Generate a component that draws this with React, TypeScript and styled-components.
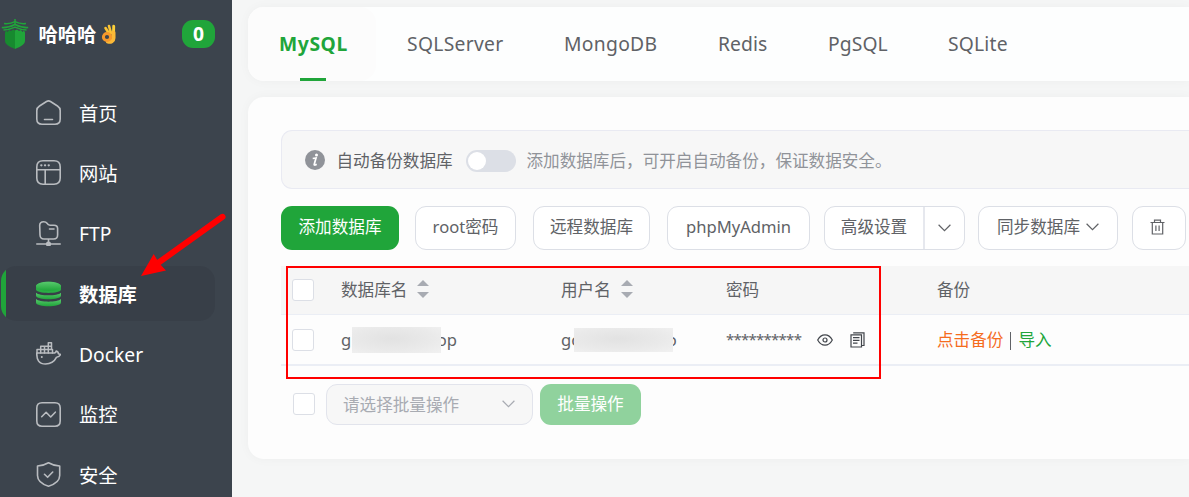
import { ReactNode } from "react";
import styled, { createGlobalStyle } from "styled-components";

const GlobalStyle = createGlobalStyle`
  * {
    box-sizing: border-box;
  }
  body {
    margin: 0;
    overflow: hidden;
    background: #f5f6f6;
    font-family: "Noto Sans", "Noto Sans CJK SC", sans-serif;
    font-size: 16.6px;
    color: #606266;
  }
`;

const Wrapper = styled.div`
  position: relative;
  display: flex;
  width: 1189px;
  height: 497px;
  overflow: hidden;
`;
const Sidebar = styled.aside`
  flex: 0 0 232px;
  height: 100%;
  background: #3c444d;
  color: #fff;
  font-size: 19.3px;
  overflow: hidden;
`;
const Brand = styled.div`
  display: flex;
  align-items: center;
  height: 68px;
  padding: 0 17px 0 1px;
  margin-bottom: 17px;
  font-weight: 700;
`;
const BrandName = styled.span`
  margin-left: 9.5px;
  padding-top: 1px;
  line-height: 28px;
`;
const Badge = styled.span`
  width: 33px;
  height: 28px;
  margin-left: auto;
  border-radius: 11px;
  background: #20a53a;
  line-height: 27px;
  text-align: center;
`;
const MenuItem = styled.div<{ $active?: boolean }>`
  display: flex;
  align-items: center;
  gap: 18px;
  width: 214px;
  height: 55px;
  margin: 0 0 5.4px 1px;
  padding-left: 35px;
  border-radius: 15px;
  background: ${(props) => (props.$active ? "linear-gradient(90deg, #20a53a 5px, #383f48 5px)" : "transparent")};
  font-weight: ${(props) => (props.$active ? 700 : 400)};
  line-height: 30px;
  svg {
    flex: none;
  }
`;
const MenuName = styled.span`
  padding-top: 2px;
`;
const Main = styled.main`
  flex: 1;
  min-width: 0;
  padding: 7px 0 0 16px;
`;
const Card = styled.section`
  background: #fdfefe;
  border-radius: 16px 0 0 16px;
  box-shadow: 0 0 12px rgba(0, 0, 0, 0.035);
`;
const Tabs = styled(Card)`
  display: flex;
  height: 74px;
  margin-bottom: 16px;
  font-size: 19.3px;
`;
const Tab = styled.div<{ $width: number; $spacing: number; $active?: boolean }>`
  position: relative;
  flex: none;
  width: ${(props) => props.$width}px;
  padding-left: 31px;
  border-radius: 16px;
  background: ${(props) => (props.$active ? "#fcfcfc" : "transparent")};
  color: ${(props) => (props.$active ? "#20a53a" : "#606266")};
  font-weight: ${(props) => (props.$active ? 700 : 400)};
  letter-spacing: ${(props) => props.$spacing}px;
  line-height: 74px;
  &::after {
    content: "";
    display: ${(props) => (props.$active ? "block" : "none")};
    position: absolute;
    left: 52px;
    bottom: 0;
    width: 26px;
    height: 3px;
    background: #20a53a;
  }
`;
const Panel = styled(Card)`
  height: 362px;
  padding: 33px 0 0 33px;
  background: #fdfdfd;
`;
const Notice = styled.div`
  display: flex;
  align-items: center;
  height: 59px;
  padding-left: 23px;
  border: 1px solid #e9eaf2;
  border-right: 0;
  border-radius: 11px 0 0 11px;
  background: #f7f7f7;
  white-space: nowrap;
`;
const NoticeTitle = styled.span`
  width: 117px;
  margin: 0 12px 0 11.5px;
`;
const NoticeText = styled.span`
  margin-left: 11px;
  color: #909399;
`;
const Switch = styled.span`
  width: 50px;
  height: 22px;
  margin-top: 2px;
  padding: 2px;
  border-radius: 11px;
  background: #dcdfe6;
  &::after {
    content: "";
    display: block;
    width: 18px;
    height: 18px;
    border-radius: 50%;
    background: #fff;
  }
`;
const Toolbar = styled.div`
  display: flex;
  height: 44px;
  margin: 17px 0 16px;
`;
const Button = styled.button<{ $width: number; $gap?: number; $primary?: boolean; $faded?: boolean }>`
  display: flex;
  flex: none;
  align-items: center;
  justify-content: center;
  gap: 6px;
  width: ${(props) => props.$width}px;
  height: 100%;
  margin: 0 ${(props) => props.$gap ?? 0}px 0 0;
  padding: 0 0 2px;
  border: ${(props) => (props.$primary ? "none" : "1px solid #dcdfe6")};
  border-radius: 11px;
  background: ${(props) => (props.$primary ? (props.$faded ? "#90d29d" : "#20a53a") : "#fff")};
  color: ${(props) => (props.$primary ? "#fff" : "#606266")};
  font: inherit;
  line-height: 40px;
  white-space: nowrap;
`;
const SplitButton = styled(Button)`
  padding: 0;
`;
const SplitLabel = styled.span`
  flex: 1;
  height: 42px;
  text-align: center;
  border-right: 2px solid #e6e8ee;
`;
const SplitArrow = styled.span`
  display: flex;
  align-items: center;
  justify-content: center;
  width: 39px;
  margin-left: -6px;
`;
const Row = styled.div<{ $head?: boolean }>`
  display: grid;
  grid-template-columns: 60px 220px 165px 211px 1fr;
  align-items: center;
  height: ${(props) => (props.$head ? 49 : 51)}px;
  border-bottom: ${(props) => (props.$head ? 1 : 2)}px solid #ebeef5;
  background: ${(props) => (props.$head ? "#f6f6f6" : "transparent")};
  line-height: 30px;
`;
const Cell = styled.div`
  display: flex;
  align-items: center;
  white-space: nowrap;
`;
const CheckBox = styled.span`
  flex: none;
  width: 22px;
  height: 22px;
  margin-left: 11px;
  border: 1px solid #dcdfe6;
  border-radius: 3px;
  background: #fff;
`;
const Sorter = styled.span`
  display: flex;
  flex-direction: column;
  gap: 6px;
  margin: 0 0 2px 10px;
  &::before,
  &::after {
    content: "";
    border: 6px solid transparent;
  }
  &::before {
    border-top: 0;
    border-bottom-color: #a8abb2;
  }
  &::after {
    border-bottom: 0;
    border-top-color: #a8abb2;
  }
`;
// blurred patch laid over the middle of a name
const Mask = styled.span<{ $width: number; $height: number; $left: number; $right: number }>`
  position: relative;
  width: ${(props) => props.$width}px;
  height: ${(props) => props.$height}px;
  margin: 0 ${(props) => props.$right}px 0 ${(props) => props.$left}px;
  background: radial-gradient(ellipse at 45% 45%, #e2e2e2, #eaeaea 60%, #f1f1f1);
`;
const Stars = styled.span`
  width: 91px;
  margin-top: -2px;
  font-size: 15px;
  letter-spacing: -0.75px;
`;
const Link = styled.a<{ $color: string }>`
  color: ${(props) => props.$color};
`;
const Divider = styled.span`
  width: 1px;
  height: 18px;
  margin: 2px 7px 0;
  background: #606266;
`;
const Batch = styled.div`
  display: flex;
  align-items: center;
  height: 41px;
  margin: 18px 0 0 1px;
  & > ${CheckBox} {
    margin-bottom: 1px;
  }
`;
const Select = styled.div`
  display: flex;
  align-items: center;
  justify-content: space-between;
  width: 207px;
  height: 41px;
  margin: 0 7px 0 11px;
  padding: 0 17px 2px 16px;
  border: 1px solid #e2e4ec;
  border-radius: 11px;
  background: #f7f7f7;
  color: #a8abb2;
`;
const Annotation = styled.svg`
  position: absolute;
  top: 0;
  left: 0;
  pointer-events: none;
`;

const LineIcon = ({ children }: { children: ReactNode }) => (
  <svg width="25" height="25" viewBox="0 0 25 25" fill="none" stroke="#b9bcc0" strokeWidth="1.6" strokeLinecap="round" strokeLinejoin="round">
    {children}
  </svg>
);

const Chevron = ({ color = "#606266" }: { color?: string }) => (
  <svg width="13" height="8" viewBox="0 0 13 8" fill="none" stroke={color} strokeWidth="1.2">
    <path d="M.6.8 6.5 6.6 12.4.8" />
  </svg>
);

const Logo = () => (
  <svg width="28" height="32" viewBox="0 0 28 32">
    <path d="M4 14.500 5 12.500 6.500 14 8 12 10 13 12 11.500 14 12.500V31C8 28.500 4 26.500 4 22.500z" fill="#178a2f" />
    <path d="M24 14.500 23 12.500 21.500 14 20 12 18 13 16 11.500 14 12.500V31C20 28.500 24 26.500 24 22.500z" fill="#20a53a" />
    <g fill="none" stroke="#20a53a">
      <path d="M14 1v6" strokeWidth="1.500" />
      <path d="M3 5.500c4 .5 8-.3 11-1.800 3 1.500 7 2.300 11 1.800" strokeWidth="1.500" />
      <path d="M.8 9.500c5 .5 9-1 13.200-3 4.200 2 8.200 3.500 13.200 3" strokeWidth="1.700" />
      <path d="M2.500 12c4 0 8-1.200 11.500-2.800 3.500 1.600 7.500 2.800 11.500 2.800" strokeWidth="1.400" />
    </g>
  </svg>
);

const OkHand = () => (
  <svg width="16" height="20" viewBox="0 0 16 20" style={{ marginLeft: 5 }}>
    <g fill="none" strokeLinecap="round">
      <path d="M8 9.500 4.500 4M10 9 8 2" stroke="#fbc433" strokeWidth="2.600" />
      <path d="M12.500 11 12.700 2.300" stroke="#fdd03a" strokeWidth="2.900" />
      <path d="M12.400 8.500v5.500c0 3-2.600 4.200-5.400 3.500" stroke="#fbb937" strokeWidth="4.200" />
      <circle cx="6" cy="13" r="3.600" stroke="#f7992b" strokeWidth="3" />
    </g>
  </svg>
);

const HomeIcon = () => (
  <LineIcon>
    <path d="M10.500 1.500Q12.500.2 14.500 1.500L21.500 6Q24.200 7.700 24.200 10.500V19Q24.200 24.200 19 24.200H6Q.8 24.200.8 19V10.500Q.8 7.700 3.500 6zM8.500 19.500h8" />
  </LineIcon>
);
const SiteIcon = () => (
  <LineIcon>
    <path d="M.8 7Q.8.8 7 .8H18Q24.200.8 24.200 7V18Q24.200 24.200 18 24.200H7Q.8 24.200.8 18zM1 9.700h23M9.200 9.700v14" />
    <path d="M5.300 5.300h.1M9 5.300h.1M12.700 5.300h.1" strokeWidth="2.300" />
  </LineIcon>
);
const FtpIcon = () => (
  <LineIcon>
    <path d="M3.700 4.500Q3.700.8 7.700.8 10 .8 11 2.200 12 4.200 14 4.200H18Q21.600 4.200 21.600 7.500V14Q21.600 18 17.600 18H8Q4.200 18 4 14zM13.500 8h4.500M12.500 18v4M.8 23h23.400" />
    <circle cx="12.500" cy="23" r="1.800" fill="#b9bcc0" />
  </LineIcon>
);
const DatabaseIcon = () => (
  <svg width="25" height="26" viewBox="0 0 25 26">
    <defs>
      <linearGradient id="disk" x1="0" y1="0" x2="0" y2="1">
        <stop offset="0" stopColor="#58c96d" />
        <stop offset="1" stopColor="#20a53a" />
      </linearGradient>
    </defs>
    <path d="M0 5.500C0-1 25-1 25 5.500V8.500C25 13 0 13 0 8.500z" fill="#2aae44" />
    <ellipse cx="12.500" cy="5.200" rx="12.500" ry="4.500" fill="url(#disk)" />
    <path d="M0 11.700C3 15.200 22 15.200 25 11.700V14.500C25 19.500 0 19.500 0 14.500z" fill="url(#disk)" />
    <path d="M0 18C3 21.500 22 21.500 25 18V21.500C25 26.500 0 26.500 0 21.500z" fill="url(#disk)" />
  </svg>
);
const DockerIcon = () => (
  <LineIcon>
    <path d="M1 11H18.500C19.500 10.700 20 10.200 20.200 9 22 9.500 22.400 11 22.400 11.800 23 12 23.800 12.200 24.500 12.500 23.800 14.400 22.500 15 20.600 15.200 18 20.300 14.500 22 9.500 22 3 22 .5 18 .8 11z" />
    <path d="M1 11V7.500H16.500V11M4.700 11V4.200H15M8.500 11V4.200M12.300 11V.8H15.500V7.500" strokeWidth="1.500" />
    <path d="M5.700 15h.2" strokeWidth="1.800" />
  </LineIcon>
);
const MonitorIcon = () => (
  <LineIcon>
    <path d="M.8 6Q.8.8 6 .8H19Q24.200.8 24.200 6V19Q24.200 24.200 19 24.200H6Q.8 24.200.8 19zM5.700 14.700 10.100 10.300 14.700 15 19.300 10.200" />
  </LineIcon>
);
const SafeIcon = () => (
  <LineIcon>
    <path d="M12.500.8Q17.500 3.800 23.700 4V13.500C23.700 19 18 22.500 12.500 24.200 7 22.500 1.500 19 1.500 13.500V4Q7.500 3.800 12.500.8zM8.500 12.300 11.600 15.300 16.700 10" />
  </LineIcon>
);

const InfoIcon = () => (
  <svg width="20" height="20" viewBox="0 0 20 20">
    <circle cx="10" cy="10" r="10" fill="#909399" />
    <circle cx="11.500" cy="4.900" r="1.500" fill="#fff" />
    <path d="M7.700 8.500 11 8 9.200 14.500Q9 15.700 11.700 14.200" fill="none" stroke="#fff" strokeWidth="1.700" />
  </svg>
);
const TrashIcon = () => (
  <svg width="15" height="16" viewBox="0 0 15 16" fill="none" stroke="#606266" strokeWidth="1.200" style={{ marginRight: 3 }}>
    <path d="M.5 3.500h14M4.500 3.500V1.100h6v2.400M2.300 3.500v11.500h10.400v-11.500M5.900 6.500v5.500M9.100 6.500v5.500" />
  </svg>
);
const EyeIcon = () => (
  <svg width="16" height="12" viewBox="0 0 16 12" fill="none" stroke="#41454b" strokeWidth="1.200">
    <path d="M.7 6C4.400-.9 11.600-.9 15.300 6 11.600 12.900 4.400 12.900.7 6z" />
    <circle cx="8" cy="6" r="2" />
  </svg>
);
const CopyIcon = () => (
  <svg width="15" height="16" viewBox="0 0 15 16" fill="none" stroke="#41454b" strokeWidth="1.200" style={{ marginLeft: 17 }}>
    <path d="M1 2.800h10.500v12.200H1zM3.200.8H14V13.500H12M3 5.700h6.500M3 8.400h6.500M3 11.200h4.500" />
  </svg>
);

const menus = [
  { name: "首页", icon: <HomeIcon /> },
  { name: "网站", icon: <SiteIcon /> },
  { name: "FTP", icon: <FtpIcon /> },
  { name: "数据库", icon: <DatabaseIcon />, active: true },
  { name: "Docker", icon: <DockerIcon /> },
  { name: "监控", icon: <MonitorIcon /> },
  { name: "安全", icon: <SafeIcon /> },
];
const tabs = [
  { name: "MySQL", width: 128, spacing: 0.6, active: true },
  { name: "SQLServer", width: 157, spacing: 0.3 },
  { name: "MongoDB", width: 154, spacing: 0.3 },
  { name: "Redis", width: 110, spacing: 0.1 },
  { name: "PgSQL", width: 120, spacing: 0.1 },
  { name: "SQLite", width: 120, spacing: 0.2 },
];

function App() {
  return (
    <Wrapper>
      <GlobalStyle />
      <Sidebar>
        <Brand>
          <Logo />
          <BrandName>哈哈哈</BrandName>
          <OkHand />
          <Badge>0</Badge>
        </Brand>
        {menus.map((menu) => (
          <MenuItem key={menu.name} $active={menu.active}>
            {menu.icon}
            <MenuName>{menu.name}</MenuName>
          </MenuItem>
        ))}
      </Sidebar>
      <Main>
        <Tabs>
          {tabs.map((tab) => (
            <Tab key={tab.name} $width={tab.width} $spacing={tab.spacing} $active={tab.active}>
              {tab.name}
            </Tab>
          ))}
        </Tabs>
        <Panel>
          <Notice>
            <InfoIcon />
            <NoticeTitle>自动备份数据库</NoticeTitle>
            <Switch />
            <NoticeText>添加数据库后，可开启自动备份，保证数据安全。</NoticeText>
          </Notice>
          <Toolbar>
            <Button $width={118} $gap={16} $primary>添加数据库</Button>
            <Button $width={101} $gap={17}>root密码</Button>
            <Button $width={117} $gap={17}>远程数据库</Button>
            <Button $width={143} $gap={14}>phpMyAdmin</Button>
            <SplitButton $width={141} $gap={13}>
              <SplitLabel>高级设置</SplitLabel>
              <SplitArrow><Chevron /></SplitArrow>
            </SplitButton>
            <Button $width={140} $gap={14}>
              同步数据库
              <Chevron />
            </Button>
            <Button $width={54}><TrashIcon /></Button>
          </Toolbar>
          <Row $head>
            <CheckBox />
            <Cell>数据库名<Sorter /></Cell>
            <Cell>用户名<Sorter /></Cell>
            <Cell>密码</Cell>
            <Cell>备份</Cell>
          </Row>
          <Row>
            <CheckBox />
            <Cell>g<Mask $width={89} $height={26} $left={0.5} $right={-4} />op</Cell>
            <Cell>go<Mask $width={99} $height={24} $left={-7.5} $right={-6} />o</Cell>
            <Cell>
              <Stars>**********</Stars>
              <EyeIcon />
              <CopyIcon />
            </Cell>
            <Cell>
              <Link $color="#f56c1d">点击备份</Link>
              <Divider />
              <Link $color="#20a53a">导入</Link>
            </Cell>
          </Row>
          <Batch>
            <CheckBox />
            <Select>
              请选择批量操作
              <Chevron color="#a8abb2" />
            </Select>
            <Button $width={101} $primary $faded>批量操作</Button>
          </Batch>
        </Panel>
      </Main>
      <Annotation width="1189" height="497" viewBox="0 0 1189 497">
        <rect x="287" y="267" width="593" height="111" fill="none" stroke="#f00" strokeWidth="2" />
        <path d="M222.500 216.800 158 263" stroke="#f00" strokeWidth="6" strokeLinecap="round" />
        <path d="M141 276 153.700 254 159 263 166 270.500z" fill="#f00" />
      </Annotation>
    </Wrapper>
  );
}
export default App;
